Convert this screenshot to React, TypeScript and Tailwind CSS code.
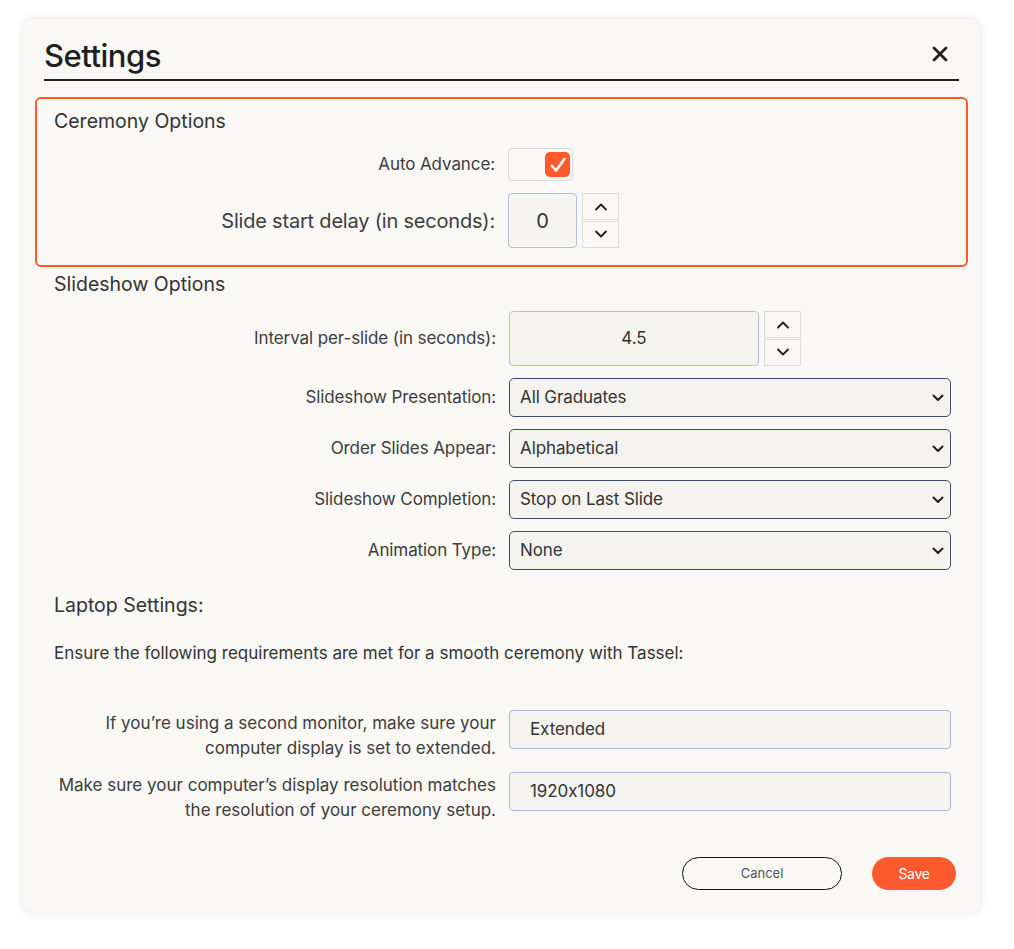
import React from "react";

const Up = () => (
  <svg width="14" height="9" viewBox="0 0 14 9" fill="none" stroke="#1f1f1f" strokeWidth="1.8" strokeLinecap="round" strokeLinejoin="round">
    <path d="M2 7.5 L7 2.5 L12 7.5" />
  </svg>
);
const Down = () => (
  <svg width="14" height="9" viewBox="0 0 14 9" fill="none" stroke="#1f1f1f" strokeWidth="1.8" strokeLinecap="round" strokeLinejoin="round">
    <path d="M2 1.5 L7 6.5 L12 1.5" />
  </svg>
);
const Chevron = () => (
  <svg width="12" height="8" viewBox="0 0 12 8" fill="none" stroke="#1f1f1f" strokeWidth="2" strokeLinecap="round" strokeLinejoin="round">
    <path d="M1.5 1.5 L6 6 L10.5 1.5" />
  </svg>
);

function Spinner() {
  return (
    <div className="flex flex-col gap-px">
      <button className="w-[37px] h-[27px] border border-[#dcdcdc] flex items-center justify-center bg-[#f9f8f5]">
        <Up />
      </button>
      <button className="w-[37px] h-[27px] border border-[#dcdcdc] flex items-center justify-center bg-[#f9f8f5]">
        <Down />
      </button>
    </div>
  );
}

const labelCls = "w-[486px] pr-[13px] text-right text-[17px] text-[#3d3d3d] tracking-[-0.1px]";

export default function App() {
  return (
    <div className="w-[1014px] h-[949px] bg-white relative" style={{ fontFamily: "Inter, 'Noto Sans', sans-serif" }}>
      <div className="absolute left-[23px] top-[19px] w-[957px] h-[894px] bg-[#f9f8f5] rounded-[10px] shadow-[0_0_8px_rgba(0,0,0,0.12)] px-[12px] pt-[20px]">
        {/* header */}
        <div className="mx-[9px] flex items-end justify-between border-b-2 border-[#222] pb-[8px] h-[42px]">
          <h1 className="text-[31px] font-medium text-[#1f1f1f] leading-none tracking-[-0.5px]">Settings</h1>
          <svg width="16" height="16" viewBox="0 0 16 16" className="mb-[9px] mr-[11px]" stroke="#1f1f1f" strokeWidth="2.8" strokeLinecap="round">
            <path d="M2 2 L14 14 M14 2 L2 14" />
          </svg>
        </div>

        {/* ceremony options */}
        <div className="mt-[16px] border-2 border-[#ff5a2c] rounded-[6px] h-[170px] pt-[8px] pl-[17px]">
          <div className="text-[19.5px] text-[#333] tracking-[0px]">Ceremony Options</div>
          <div className="flex items-center mt-[12px] -ml-[19px]">
            <div className="w-[473px] pr-[13px] text-right text-[17px] text-[#3d3d3d] tracking-[-0.1px]">Auto Advance:</div>
            <div className="w-[65px] h-[33px] border border-[#dadada] rounded-[4px] flex items-center justify-end pr-[2px]">
              <div className="w-[25px] h-[25px] rounded-[5px] bg-[#ff5a2c] flex items-center justify-center">
                <svg width="18" height="16" viewBox="0 0 18 16" fill="none" stroke="white" strokeWidth="2.6" strokeLinecap="round" strokeLinejoin="round">
                  <path d="M3 9 L7 13.5 L15.5 2" />
                </svg>
              </div>
            </div>
          </div>
          <div className="flex items-center mt-[12px] -ml-[19px]">
            <div className="w-[473px] pr-[13px] text-right text-[20px] text-[#3d3d3d] tracking-[-0.2px]">Slide start delay (in seconds):</div>
            <div className="w-[69px] h-[55px] border border-[#b3bfd9] rounded-[4px] bg-[#f5f4f1] flex items-center justify-center text-[20px] text-[#333]">0</div>
            <div className="ml-[5px]"><Spinner /></div>
          </div>
        </div>

        {/* slideshow options */}
        <div className="pl-[19px] mt-[3px] text-[19.5px] text-[#333] tracking-[0px]">Slideshow Options</div>
        <div className="flex flex-col mt-[12px] -ml-[12px]">
          <div className="flex items-center">
            <div className={labelCls}>Interval per-slide (in seconds):</div>
            <div className="w-[250px] h-[55px] border border-[#b3bfd9] rounded-[4px] bg-[#f5f4f1] flex items-center justify-center text-[17px] text-[#333]">4.5</div>
            <div className="ml-[5px]"><Spinner /></div>
          </div>
          <div className="flex flex-col gap-[12px] mt-[12px]">
            {[
              ["Slideshow Presentation:", "All Graduates"],
              ["Order Slides Appear:", "Alphabetical"],
              ["Slideshow Completion:", "Stop on Last Slide"],
              ["Animation Type:", "None"],
            ].map(([l, v]) => (
              <div key={l} className="flex items-center">
                <div className={labelCls}>{l}</div>
                <div className="w-[442px] h-[39px] border border-[#3f4d6b] rounded-[5px] bg-[#f5f3ef] flex items-center justify-between pl-[10px] pr-[6px]">
                  <span className="text-[17px] text-[#333] tracking-[-0.1px]">{v}</span>
                  <Chevron />
                </div>
              </div>
            ))}
          </div>
        </div>

        {/* laptop */}
        <div className="pl-[19px] mt-[21px] text-[19.5px] text-[#333] tracking-[0px]">Laptop Settings:</div>
        <div className="pl-[19px] mt-[20px] text-[17px] text-[#333] tracking-[0px]">Ensure the following requirements are met for a smooth ceremony with Tassel:</div>

        <div className="flex flex-col gap-[12px] mt-[44px] -ml-[12px]">
          <div className="flex items-start h-[50px]">
            <div className="w-[486px] pr-[13px] text-right text-[17px] leading-[25px] text-[#3d3d3d] tracking-[0px] mt-[1px]">
              If you’re using a second monitor, make sure your<br />computer display is set to extended.
            </div>
            <div className="w-[442px] h-[39px] border border-[#a9b7d8] rounded-[4px] bg-[#f5f4f1] flex items-center pl-[20px] text-[17px] text-[#333] tracking-[-0.1px]">Extended</div>
          </div>
          <div className="flex items-start h-[50px]">
            <div className="w-[486px] pr-[13px] text-right text-[17px] leading-[25px] text-[#3d3d3d] tracking-[0px] mt-[1px]">
              Make sure your computer’s display resolution matches<br />the resolution of your ceremony setup.
            </div>
            <div className="w-[442px] h-[39px] border border-[#a9b7d8] rounded-[4px] bg-[#f5f4f1] flex items-center pl-[20px] text-[17px] text-[#333] tracking-[-0.1px]">1920x1080</div>
          </div>
        </div>

        <div className="flex justify-end gap-[30px] mt-[35px] pr-[12px]">
          <button className="w-[160px] h-[33px] rounded-full border border-[#111] text-[13px] text-[#555]">Cancel</button>
          <button className="w-[84px] h-[33px] rounded-full bg-[#ff5a2f] text-[14px] text-white tracking-[-0.3px]">Save</button>
        </div>
      </div>
    </div>
  );
}
